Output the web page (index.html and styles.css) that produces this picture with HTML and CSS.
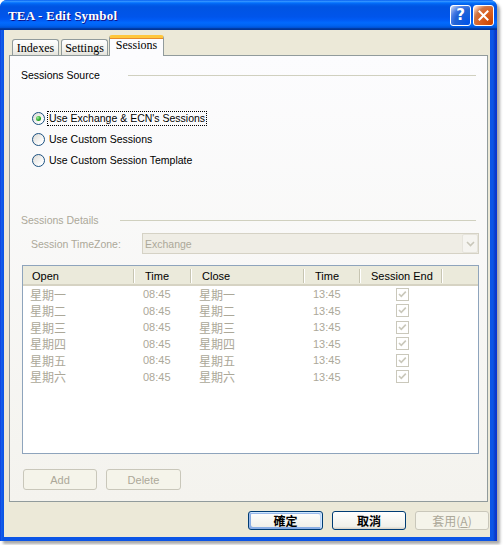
FILE: index.html
```html
<!DOCTYPE html>
<html>
<head>
<meta charset="utf-8">
<title>TEA - Edit Symbol</title>
<link rel="stylesheet" href="styles.css">
</head>
<body>
<div class="window">
  <div class="titlebar">
    <span class="title">TEA - Edit Symbol</span>
    <div class="tb-btns">
      <span class="tb-btn help">?</span>
      <span class="tb-btn close"><svg width="11" height="11" viewBox="0 0 11 11"><path d="M1.5 1.5 L9.5 9.5 M9.5 1.5 L1.5 9.5" stroke="#fff" stroke-width="2" stroke-linecap="square"/></svg></span>
    </div>
  </div>
  <div class="client">
    <div class="tabs">
      <div class="tab t1">Indexes</div>
      <div class="tab t2">Settings</div>
      <div class="tab active">Sessions</div>
    </div>
    <div class="panel">
      <div class="group-head">
        <span class="gh-label src">Sessions Source</span><span class="gh-line"></span>
      </div>
      <div class="radios">
        <div class="radio"><span class="rb checked"><span class="dot"></span></span><span class="rl focus">Use Exchange &amp; ECN's Sessions</span></div>
        <div class="radio"><span class="rb"></span><span class="rl">Use Custom Sessions</span></div>
        <div class="radio"><span class="rb"></span><span class="rl">Use Custom Session Template</span></div>
      </div>
      <div class="group-head details">
        <span class="gh-label det">Sessions Details</span><span class="gh-line"></span>
      </div>
      <div class="tz-row">
        <span class="tz-label">Session TimeZone:</span>
        <div class="combo">
          <span class="combo-text">Exchange</span>
          <span class="combo-btn"><svg width="9" height="6" viewBox="0 0 9 6"><path d="M1 1 L4.5 4.5 L8 1" fill="none" stroke="#c9c7ba" stroke-width="1.6"/></svg></span>
        </div>
      </div>
      <div class="listview">
        <div class="lv-head">
          <div class="hc c1"><span>Open</span><i class="div"></i></div>
          <div class="hc c2"><span>Time</span><i class="div"></i></div>
          <div class="hc c3"><span>Close</span><i class="div"></i></div>
          <div class="hc c4"><span>Time</span><i class="div"></i></div>
          <div class="hc c5"><span>Session End</span><i class="div"></i></div>
        </div>
        <div class="lv-row"><span class="c1 cjk">星期一</span><span class="c2 num">08:45</span><span class="c3 cjk">星期一</span><span class="c4 num">13:45</span><span class="c5 chk"><svg width="13" height="13" viewBox="0 0 13 13"><rect x="0.5" y="0.5" width="12" height="12" fill="#fff" stroke="#cac8bb"/><path d="M3 6 L5.3 8.4 L9.8 3.6" fill="none" stroke="#cac8bb" stroke-width="1.6"/></svg></span></div>
        <div class="lv-row"><span class="c1 cjk">星期二</span><span class="c2 num">08:45</span><span class="c3 cjk">星期二</span><span class="c4 num">13:45</span><span class="c5 chk"><svg width="13" height="13" viewBox="0 0 13 13"><rect x="0.5" y="0.5" width="12" height="12" fill="#fff" stroke="#cac8bb"/><path d="M3 6 L5.3 8.4 L9.8 3.6" fill="none" stroke="#cac8bb" stroke-width="1.6"/></svg></span></div>
        <div class="lv-row"><span class="c1 cjk">星期三</span><span class="c2 num">08:45</span><span class="c3 cjk">星期三</span><span class="c4 num">13:45</span><span class="c5 chk"><svg width="13" height="13" viewBox="0 0 13 13"><rect x="0.5" y="0.5" width="12" height="12" fill="#fff" stroke="#cac8bb"/><path d="M3 6 L5.3 8.4 L9.8 3.6" fill="none" stroke="#cac8bb" stroke-width="1.6"/></svg></span></div>
        <div class="lv-row"><span class="c1 cjk">星期四</span><span class="c2 num">08:45</span><span class="c3 cjk">星期四</span><span class="c4 num">13:45</span><span class="c5 chk"><svg width="13" height="13" viewBox="0 0 13 13"><rect x="0.5" y="0.5" width="12" height="12" fill="#fff" stroke="#cac8bb"/><path d="M3 6 L5.3 8.4 L9.8 3.6" fill="none" stroke="#cac8bb" stroke-width="1.6"/></svg></span></div>
        <div class="lv-row"><span class="c1 cjk">星期五</span><span class="c2 num">08:45</span><span class="c3 cjk">星期五</span><span class="c4 num">13:45</span><span class="c5 chk"><svg width="13" height="13" viewBox="0 0 13 13"><rect x="0.5" y="0.5" width="12" height="12" fill="#fff" stroke="#cac8bb"/><path d="M3 6 L5.3 8.4 L9.8 3.6" fill="none" stroke="#cac8bb" stroke-width="1.6"/></svg></span></div>
        <div class="lv-row"><span class="c1 cjk">星期六</span><span class="c2 num">08:45</span><span class="c3 cjk">星期六</span><span class="c4 num">13:45</span><span class="c5 chk"><svg width="13" height="13" viewBox="0 0 13 13"><rect x="0.5" y="0.5" width="12" height="12" fill="#fff" stroke="#cac8bb"/><path d="M3 6 L5.3 8.4 L9.8 3.6" fill="none" stroke="#cac8bb" stroke-width="1.6"/></svg></span></div>
      </div>
      <div class="panel-btns">
        <button class="btn disabled add">Add</button>
        <button class="btn disabled del">Delete</button>
      </div>
    </div>
    <div class="dlg-btns">
      <button class="btn cjkbtn default ok">確定</button>
      <button class="btn cjkbtn cancel">取消</button>
      <button class="btn cjkbtn disabled apply">套用(<u>A</u>)</button>
    </div>
  </div>
</div>
</body>
</html>
```

FILE: styles.css
```css
html, body {
  margin: 0;
  padding: 0;
  background: #ffffff;
}
body {
  width: 504px;
  height: 545px;
  overflow: hidden;
  font-family: "Liberation Sans", Arial, sans-serif;
  font-size: 10.5px;
  color: #000;
}
.window {
  width: 497px;
  height: 541px;
  display: flex;
  flex-direction: column;
  background: linear-gradient(to right, #0831d9 0, #1660ea 1px, #0b55e6 3px, #0b55e6 calc(100% - 4px), #0a3fc8 calc(100% - 2px), #0831d9 100%);
  border-radius: 7px 7px 0 0;
  box-shadow: 3px 3px 3px rgba(0, 0, 0, 0.35);
}
.titlebar {
  height: 30px;
  flex: none;
  display: flex;
  align-items: center;
  justify-content: space-between;
  padding: 0 3px 0 8px;
  border-radius: 7px 7px 0 0;
  background: linear-gradient(180deg, #0058ee 0%, #3593ff 4%, #288eff 6%, #127dff 8%, #036ffc 10%, #0262ee 14%, #0057e5 20%, #0054e3 24%, #0055eb 56%, #005bf5 66%, #026afe 76%, #0062ef 86%, #0052d6 92%, #0040ab 94%, #003092 100%);
}
.title {
  color: #fff;
  font-family: "Liberation Serif", "Times New Roman", serif;
  font-weight: bold;
  font-size: 13px;
  letter-spacing: 0.2px;
  text-shadow: 1px 1px #0f1089;
  margin-top: 1px;
}
.tb-btns {
  display: flex;
  gap: 2px;
}
.tb-btn {
  width: 21px;
  height: 21px;
  box-sizing: border-box;
  border: 1px solid #fff;
  border-radius: 3px;
  display: flex;
  align-items: center;
  justify-content: center;
  color: #fff;
}
.help {
  background: radial-gradient(circle at 90% 90%, #0054e9 0%, #2263d5 55%, #4479e4 70%, #a3bbec 90%, #fff 100%);
  font-family: "DejaVu Sans", sans-serif;
  font-weight: bold;
  font-size: 15px;
}
.close {
  background: radial-gradient(circle at 90% 90%, #cc4600 0%, #dc6527 55%, #cd7546 70%, #ffccb2 90%, #fff 100%);
}
.client {
  flex: 1;
  margin: 0 7px 4px 4px;
  background: #ece9d8;
  display: flex;
  flex-direction: column;
}
.tabs {
  height: 20px;
  margin-top: 5px;
  display: flex;
  align-items: flex-end;
  font-family: "Liberation Serif", "Times New Roman", serif;
  font-size: 12px;
}
.tab {
  height: 16px;
  box-sizing: border-box;
  border: 1px solid #919b9c;
  border-bottom: none;
  border-radius: 3px 3px 0 0;
  background: linear-gradient(#ffffff, #f3f3ef 60%, #e4e3dc);
  display: flex;
  align-items: center;
  justify-content: center;
  padding-top: 1px;
}
.t1 { width: 47px; margin-left: 8px; }
.t2 { width: 47px; margin-left: 2px; }
.tab.active {
  width: 55px;
  height: 21px;
  margin-left: 1px;
  margin-bottom: -1px;
  position: relative;
  z-index: 1;
  background: #fcfcfe;
  border-top: 3px solid #ffc73c;
  box-shadow: inset 0 1px 0 #e68b2c;
  padding-top: 0;
  padding-bottom: 4px;
}
.panel {
  width: 479px;
  height: 447px;
  box-sizing: border-box;
  margin-left: 5px;
  border: 1px solid #919b9c;
  background: linear-gradient(#fcfcfe, #f4f3ee);
  display: flex;
  flex-direction: column;
}
.group-head {
  height: 16px;
  display: flex;
  align-items: center;
  margin: 11px 11px 0 11px;
}
.gh-label.src { width: 107px; }
.gh-label.det { width: 99px; }
.gh-line {
  flex: 1;
  height: 1px;
  background: #d0d0bf;
}
.details {
  margin-top: 41px;
  color: #aca899;
}
.radios {
  margin: 25px 0 0 22px;
  display: flex;
  flex-direction: column;
}
.radio {
  height: 21px;
  display: flex;
  align-items: center;
}
.rb {
  width: 13px;
  height: 13px;
  box-sizing: border-box;
  border: 1px solid #1c5180;
  border-radius: 50%;
  background: linear-gradient(135deg, #dcdad5 0%, #fff 80%);
  display: flex;
  align-items: center;
  justify-content: center;
  flex: none;
}
.dot {
  width: 5px;
  height: 5px;
  border-radius: 50%;
  background: radial-gradient(circle at 35% 35%, #a0f0a0, #21a121 60%);
}
.rl {
  margin-left: 2px;
  padding: 0 1px;
  line-height: 13px;
  border: 1px dotted transparent;
}
.rl.focus {
  border-color: #000;
}
.tz-row {
  margin: 5px 0 0 21px;
  height: 21px;
  display: flex;
  align-items: center;
  color: #aca899;
}
.tz-label {
  width: 111px;
}
.combo {
  width: 337px;
  height: 21px;
  box-sizing: border-box;
  border: 1px solid #d5d2c5;
  background: #efede5;
  display: flex;
  align-items: center;
  justify-content: space-between;
  padding-left: 2px;
}
.combo-btn {
  width: 16px;
  height: 19px;
  box-sizing: border-box;
  border: 1px solid #e6e4dc;
  border-radius: 2px;
  background: #f5f4f0;
  display: flex;
  align-items: center;
  justify-content: center;
}
.listview {
  margin: 11px 0 0 12px;
  width: 457px;
  height: 189px;
  box-sizing: border-box;
  border: 1px solid #8ea4bc;
  background: #fff;
}
.lv-head {
  height: 20px;
  box-sizing: border-box;
  display: flex;
  background: #ebeadb;
  border-bottom: 2px solid #d6d3c3;
  font-size: 11px;
}
.hc {
  display: flex;
  align-items: center;
  justify-content: space-between;
  padding-left: 9px;
  padding-top: 1px;
  box-sizing: border-box;
}
.hc .div {
  width: 1px;
  height: 14px;
  background: #c7c5b2;
  border-right: 1px solid #fff;
}
.c1 { width: 112px; }
.c2 { width: 57px; }
.c3 { width: 113px; }
.c4 { width: 56px; }
.c5 { width: 82px; }
.hc.c2, .hc.c3, .hc.c4, .hc.c5 { padding-left: 10px; }
.lv-row {
  height: 16.5px;
  display: flex;
  align-items: center;
  color: #aca899;
}
.lv-row span {
  box-sizing: border-box;
  display: flex;
  align-items: center;
}
.cjk {
  font-family: "Noto Sans CJK TC", "Noto Sans CJK SC", sans-serif;
  font-size: 12px;
  padding-left: 7px;
}
.num {
  padding-left: 8px;
  font-size: 11px;
}
.chk {
  justify-content: center;
  padding-left: 1px;
}
.panel-btns {
  margin: 15px 0 0 13px;
  display: flex;
  gap: 9px;
}
.btn {
  height: 21px;
  box-sizing: border-box;
  border: 1px solid #003c74;
  border-radius: 3px;
  background: linear-gradient(#ffffff, #f0f0ea 85%, #d6d0c5);
  font-family: "Liberation Sans", Arial, sans-serif;
  font-size: 11px;
  color: #000;
  padding: 0;
  display: flex;
  align-items: center;
  justify-content: center;
}
.btn.disabled {
  border-color: #c9c7ba;
  background: #f5f4ea;
  color: #aca899;
}
.add { width: 74px; }
.del { width: 75px; }
.dlg-btns {
  margin-top: 9px;
  padding-right: 1px;
  display: flex;
  justify-content: flex-end;
  gap: 9px;
}
.cjkbtn {
  height: 19px;
  width: 74px;
  font-family: "Noto Sans CJK TC", "Noto Sans CJK SC", sans-serif;
  font-size: 12px;
  font-weight: bold;
}
.cjkbtn.disabled {
  font-weight: normal;
}
.ok {
  width: 75px;
  box-shadow: inset -1px 1px #cee7ff, inset 1px 2px #98b8ea, inset -2px 2px #bcd4f6, inset 1px -1px #89ade4, inset 2px -2px #89ade4;
}
```
